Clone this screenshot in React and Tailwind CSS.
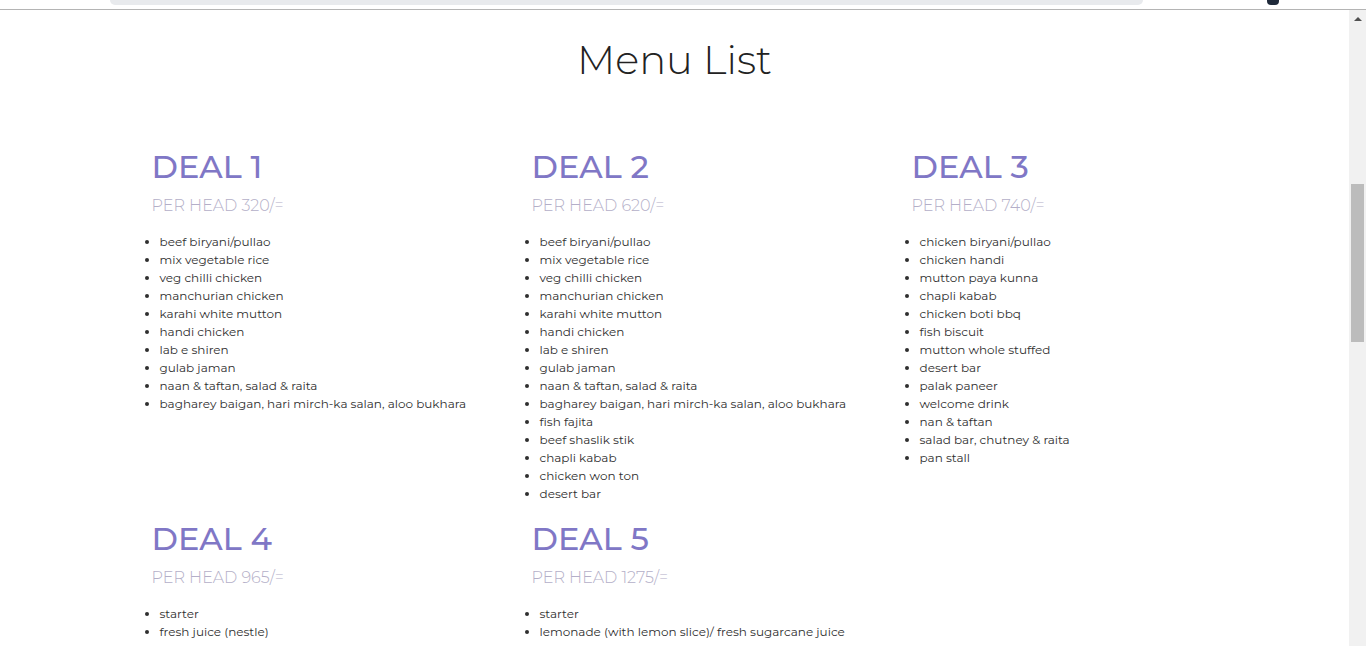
const deals = [
  {
    name: "DEAL 1",
    price: "PER HEAD 320/=",
    items: [
      "beef biryani/pullao",
      "mix vegetable rice",
      "veg chilli chicken",
      "manchurian chicken",
      "karahi white mutton",
      "handi chicken",
      "lab e shiren",
      "gulab jaman",
      "naan & taftan, salad & raita",
      "bagharey baigan, hari mirch-ka salan, aloo bukhara",
    ],
  },
  {
    name: "DEAL 2",
    price: "PER HEAD 620/=",
    items: [
      "beef biryani/pullao",
      "mix vegetable rice",
      "veg chilli chicken",
      "manchurian chicken",
      "karahi white mutton",
      "handi chicken",
      "lab e shiren",
      "gulab jaman",
      "naan & taftan, salad & raita",
      "bagharey baigan, hari mirch-ka salan, aloo bukhara",
      "fish fajita",
      "beef shaslik stik",
      "chapli kabab",
      "chicken won ton",
      "desert bar",
    ],
  },
  {
    name: "DEAL 3",
    price: "PER HEAD 740/=",
    items: [
      "chicken biryani/pullao",
      "chicken handi",
      "mutton paya kunna",
      "chapli kabab",
      "chicken boti bbq",
      "fish biscuit",
      "mutton whole stuffed",
      "desert bar",
      "palak paneer",
      "welcome drink",
      "nan & taftan",
      "salad bar, chutney & raita",
      "pan stall",
    ],
  },
  {
    name: "DEAL 4",
    price: "PER HEAD 965/=",
    items: ["starter", "fresh juice (nestle)", "chicken corn soup", "fish fingers"],
  },
  {
    name: "DEAL 5",
    price: "PER HEAD 1275/=",
    items: [
      "starter",
      "lemonade (with lemon slice)/ fresh sugarcane juice",
      "dhaka chicken",
      "finger fish",
    ],
  },
];

function DealCard({ deal }) {
  return (
    <div className="px-[15px] pb-[16px]">
      <h2 className="pl-[32px] text-[32px] leading-[40px] font-medium text-[#8077c6]">
        {deal.name}
      </h2>
      <p className="pl-[32px] mt-[7px] text-[16px] leading-[24px] font-light text-[#b4afc8]">
        {deal.price}
      </p>
      <ul className="mt-[15px] pl-[40px] list-disc text-[12px] leading-[18px] text-[#2f2f2f]">
        {deal.items.map((item, i) => (
          <li key={i}>{item}</li>
        ))}
      </ul>
    </div>
  );
}

export default function App() {
  return (
    <div
      className="h-[646px] overflow-hidden bg-white flex flex-col"
      style={{ fontFamily: "Montserrat, 'Open Sans', 'Noto Sans', sans-serif" }}
    >
      {/* top chrome fragment */}
      <div className="h-[9px] relative shrink-0">
        <div className="absolute left-[110px] top-0 w-[1033px] h-[5px] bg-[#e8eaed] rounded-b-[10px]" />
        <div className="absolute left-[1267px] top-0 w-[12px] h-[5px] bg-[#1f2a3a] rounded-b-[4px]" />
      </div>
      <div className="h-px bg-[#b4b4b4] shrink-0" />

      <div className="flex flex-1 min-h-0">
        <main className="flex-1 min-w-0">
          <h1 className="text-center text-[40px] leading-[48px] font-light text-[#222] mt-[26px]">
            Menu List
          </h1>
          <div className="w-[1140px] mx-auto mt-[63px] grid grid-cols-3">
            {deals.map((d) => (
              <DealCard key={d.name} deal={d} />
            ))}
          </div>
        </main>

        {/* scrollbar */}
        <div className="w-[17px] shrink-0 bg-[#f1f1f1] flex flex-col items-center">
          <div className="h-[17px] flex items-center justify-center">
            <div className="w-0 h-0 border-l-[4px] border-r-[4px] border-b-[4px] border-l-transparent border-r-transparent border-b-[#505050]" />
          </div>
          <div className="mt-[157px] w-[13px] h-[158px] bg-[#bcbcbc]" />
        </div>
      </div>
    </div>
  );
}
